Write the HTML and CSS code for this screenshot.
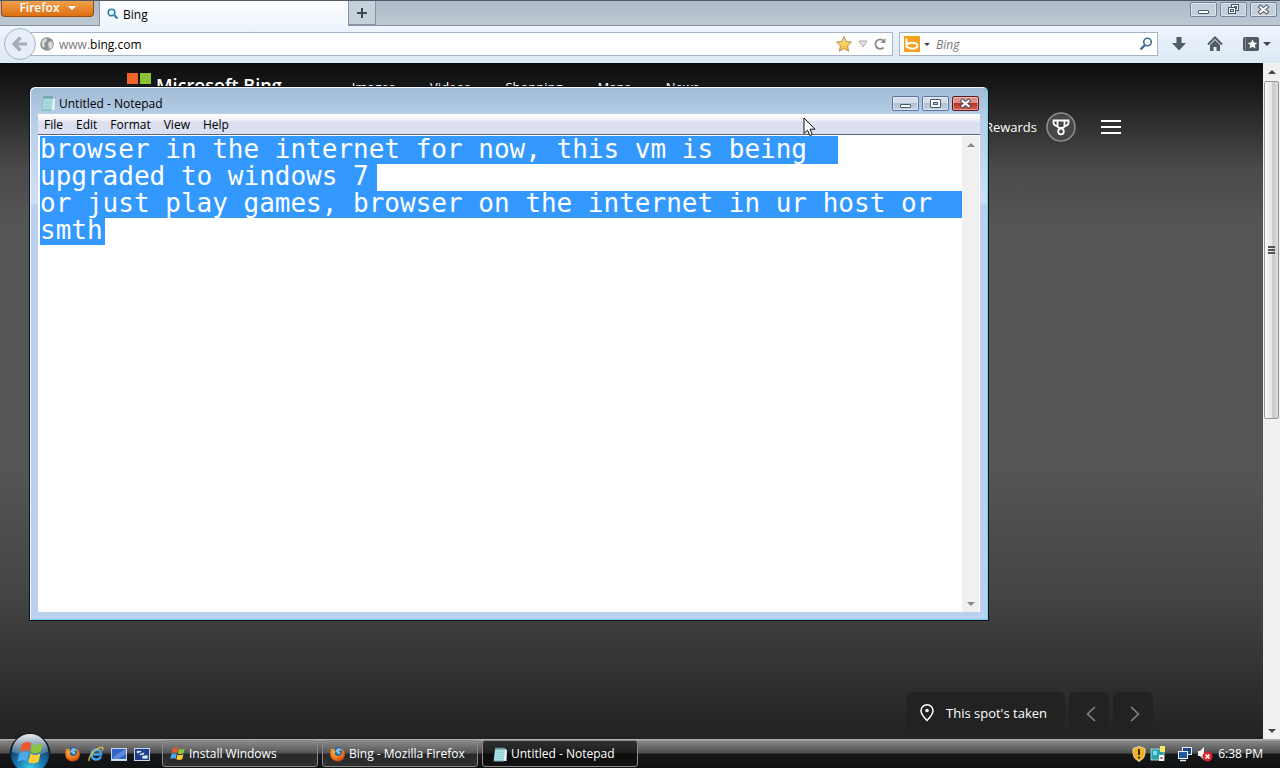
FILE: index.html
```html
<!DOCTYPE html>
<html lang="en">
<head>
  <meta charset="UTF-8" />
  <meta name="viewport" content="width=device-width, initial-scale=1.0" />
  <title>Desktop</title>
  <link rel="stylesheet" href="styles.css">
</head>
<body>

  <!-- shared icons -->
  <svg class="sprite" aria-hidden="true">
    <defs>
      <radialGradient id="foxOrange" cx="0.4" cy="0.3" r="0.8">
        <stop offset="0" stop-color="#ffc03a" />
        <stop offset="0.6" stop-color="#ee7413" />
        <stop offset="1" stop-color="#b8340a" />
      </radialGradient>
      <linearGradient id="starGold" x1="0" y1="0" x2="0" y2="1">
        <stop offset="0" stop-color="#ffe98c" />
        <stop offset="1" stop-color="#f5b92e" />
      </linearGradient>
      <radialGradient id="orbBlue" cx="0.5" cy="0.9" r="0.9">
        <stop offset="0" stop-color="#3fd0ee" />
        <stop offset="0.4" stop-color="#1778b0" />
        <stop offset="0.8" stop-color="#123d66" />
        <stop offset="1" stop-color="#2d4d68" />
      </radialGradient>
      <linearGradient id="orbShine" x1="0" y1="0" x2="0" y2="1">
        <stop offset="0" stop-color="#fff" stop-opacity="0.9" />
        <stop offset="1" stop-color="#fff" stop-opacity="0.15" />
      </linearGradient>
    </defs>
    <symbol id="flag" viewBox="0 0 20 20">
      <path d="M3.500 3.500q3.500-2.500 6.800-0.500l-1.400 6q-3.300-2-7 0.200z" fill="#e8582a" />
      <path d="M11 3.500q3.500 1.800 7.500-0.500l-1.500 6q-3.700 2.200-7.300 0.500z" fill="#8cc63e" />
      <path d="M1.600 10.300q3.600-2.200 7-0.200l-1.400 6q-3.300-2-7 0.300z" fill="#4aa8e8" />
      <path d="M9.500 10.500q3.700 1.800 7.300-0.300l-1.400 6.100q-3.700 2-7.400 0.300z" fill="#ffcb2e" />
    </symbol>
    <symbol id="firefox" viewBox="0 0 16 16">
      <circle cx="8" cy="7.500" r="6.500" fill="#2a5f9e" />
      <path d="M8 2q3 0 4 3q-2-1-3 0q2 1 1 3q-2 1-3-1q-2-1-1-3z" fill="#7cc0ea" />
      <path d="M1 1.500q0.500 1.500 1.500 1.700q1.500-0.800 3-0.300q-1.500 1-1.300 2.200l2 0.700q-0.700 0.900-1.700 1.200q0.500 3 3.500 3q3.500-0.200 3.800-3.500q1-1.500-0.800-4q3.300 1.300 3.800 4.500q0.900 7.500-6.500 8.500q-8-0.300-8-7.500q0-2 0.500-3.500q-0.300-1.500 0.200-3z" fill="url(#foxOrange)" />
    </symbol>
    <symbol id="notepad" viewBox="0 0 16 16">
      <path d="M3 2.500h10.500l-0.500 11.500-1.500 1.500h-10z" fill="#6fa9b4" />
      <path d="M3.500 2.500h9.500l-1 12h-10z" fill="#a9dde2" />
      <path d="M13 3l2 1-0.500 11h-3z" fill="#e9f3f3" />
      <path d="M4 1v3M6 1v3M8 1v3M10 1v3M12 1v3" stroke="#4f7f8c" stroke-width="0.800" />
      <path d="M4 6.500h8M4 8.500h8M3.500 10.500h8M3.500 12.500h8" stroke="#8ec7d0" stroke-width="0.600" />
    </symbol>
    <symbol id="minimize" viewBox="0 0 27 15">
      <rect x="8.500" y="8.500" width="10" height="3" rx="0.500" fill="#fff" stroke="#4b566f" />
    </symbol>
    <symbol id="maximize" viewBox="0 0 27 15">
      <rect x="8.500" y="3.500" width="10" height="8" rx="0.500" fill="#fff" stroke="#4b566f" />
      <rect x="11.500" y="6.500" width="4" height="2" fill="#b9c8dc" stroke="#4b566f" />
    </symbol>
    <symbol id="restore" viewBox="0 0 27 15">
      <rect x="11.500" y="2.500" width="7" height="6" fill="#fff" stroke="#4b566f" />
      <rect x="14.500" y="4.500" width="2" height="2" fill="#cdd8e4" stroke="#4b566f" />
      <rect x="8.500" y="5.500" width="7" height="6" fill="#fff" stroke="#4b566f" />
      <rect x="10.500" y="7.500" width="3" height="2" fill="#cdd8e4" stroke="#4b566f" />
    </symbol>
    <symbol id="close" viewBox="0 0 27 15">
      <path d="M10.500 5l6 5M16.500 5l-6 5" stroke="#4b4f62" stroke-width="4" stroke-linecap="square" />
      <path d="M10.500 5l6 5M16.500 5l-6 5" stroke="#fff" stroke-width="2.200" stroke-linecap="square" />
    </symbol>
  </svg>

  <main class="browser">
    <header class="tab-strip">
      <button class="firefox-button">Firefox <span class="caret"></span></button>
      <button class="tab">
        <svg class="teal" width="12" height="12" viewBox="0 0 12 12"><circle cx="4.500" cy="4.500" r="3.300" fill="none" stroke-width="1.600" /><path d="M7 7l3.500 3.500" stroke-width="2" /></svg>
        Bing
      </button>
      <button class="new-tab" aria-label="New tab">
        <svg width="12" height="12" viewBox="0 0 12 12"><path d="M6 1v10M1 6h10" stroke="#3e4852" stroke-width="2" /></svg>
      </button>
      <div class="caption-buttons">
        <button aria-label="Minimize"><svg><use href="#minimize" /></svg></button>
        <button aria-label="Restore"><svg><use href="#restore" /></svg></button>
        <button aria-label="Close"><svg><use href="#close" /></svg></button>
      </div>
    </header>

    <div class="toolbar">
      <button class="back" aria-label="Back">
        <svg width="16" height="16" viewBox="0 0 16 16"><path d="M8.500 1.500L2 8l6.500 6.500M3 8h12" fill="none" stroke="#a3adb9" stroke-width="3.200" /></svg>
      </button>
      <div class="url-bar">
        <svg width="14" height="14" viewBox="0 0 14 14"><circle cx="7" cy="7" r="6.800" fill="#8f9295" /><path d="M2 4q3-3 5-2l-1 3-2 1 1 2-1 3q-3-2-2-7zM8 6l3-2 2 3-1 4-3 1z" fill="#d9dbdd" /></svg>
        <span class="url"><span class="dim">www.</span>bing.com</span>
        <svg width="18" height="18" viewBox="0 0 18 18"><path d="M9 1.500l2.200 5 5.300 0.600-3.900 3.700 1 5.400-4.600-2.700-4.600 2.700 1-5.400-3.900-3.700 5.300-0.600z" fill="url(#starGold)" stroke="#b8905a" /></svg>
        <svg width="10" height="8" viewBox="0 0 10 8"><path d="M1 1h8l-4 6z" fill="#e4e4e4" stroke="#a9a9a9" /></svg>
        <svg width="14" height="14" viewBox="0 0 14 14"><path d="M10.500 10.500A4.700 4.700 0 1 1 10.500 3.800" fill="none" stroke="#8d8d8d" stroke-width="2" /><path d="M7.500 6h5V1z" fill="#8d8d8d" /></svg>
      </div>
      <label class="search-bar">
        <svg width="16" height="16" viewBox="0 0 16 16"><rect width="16" height="16" fill="#f3a21f" /><path d="M2.500 2.500v9M3 11q6 3 9.500 0.500q2-2.500-0.500-4q-4-1.500-8.500 0.500" fill="none" stroke="#fff" stroke-width="2" /></svg>
        <span class="caret dark small"></span>
        <input type="text" placeholder="Bing" aria-label="Search">
        <svg width="14" height="14" viewBox="0 0 14 14"><circle cx="8.500" cy="5" r="3.800" fill="none" stroke="#3f6d96" stroke-width="1.600" /><path d="M6 8l-4.500 4.500" stroke="#3f6d96" stroke-width="2.400" /></svg>
      </label>
      <button class="tool" aria-label="Downloads"><svg width="14" height="14" viewBox="0 0 14 14"><path d="M4.500 0h5v6h4.500l-7 7.500-7-7.500h4.500z" fill="#525c68" /></svg></button>
      <button class="tool" aria-label="Home"><svg width="16" height="16" viewBox="0 0 16 16"><path d="M1 8.500l7-7 7 7" fill="none" stroke="#525c68" stroke-width="2" /><path d="M3 9l5-5 5 5v6h-3.500v-4h-3v4h-3.500z" fill="#525c68" /></svg></button>
      <button class="tool" aria-label="Bookmarks">
        <svg width="16" height="14" viewBox="0 0 16 14"><rect width="16" height="14" rx="2" fill="#4f5863" /><path d="M2.500 1v12" stroke="#8a929c" /><path d="M9.500 2.500l1.500 3 3.200 0.400-2.400 2.200 0.700 3.300-3-1.700-3 1.700 0.700-3.300-2.400-2.200 3.200-0.400z" fill="#fff" /></svg>
        <span class="caret dark"></span>
      </button>
    </div>

    <div class="viewport">
      <div class="bing">
        <header class="bing-header">
          <a class="logo" href="#">
            <svg width="24" height="24" viewBox="0 0 24 24"><path d="M0 0h11v11H0z" fill="#f1642a" /><path d="M13 0h11v11H13z" fill="#8bc234" /><path d="M0 13h11v11H0z" fill="#1ba5e8" /><path d="M13 13h11v11H13z" fill="#f8b91c" /></svg>
            Microsoft Bing
          </a>
          <nav>
            <a href="#">Images</a>
            <a href="#">Videos</a>
            <a href="#">Shopping</a>
            <a href="#">Maps</a>
            <a href="#">News</a>
          </nav>
          <div class="account">
            <a href="#">Rewards</a>
            <svg width="30" height="30" viewBox="0 0 30 30"><circle cx="15" cy="15" r="14" fill="#474747" stroke="#8b8b8b" stroke-width="1.600" /><g fill="none" stroke="#fff" stroke-width="1.800"><path d="M7.500 8.500h15v2.500q0 2-3 3l-3 2h-3l-3-2q-3-1-3-3zM11.500 8.500v5.500M18.500 8.500v5.500" /><circle cx="15" cy="19.500" r="2.800" /></g></svg>
            <button class="menu-toggle" aria-label="Menu"><svg width="20" height="16" viewBox="0 0 20 16"><path d="M0 2h20M0 8h20M0 14h20" stroke="#fff" stroke-width="2" /></svg></button>
          </div>
        </header>
        <footer class="spot">
          <a class="place" href="#">
            <svg width="14" height="18" viewBox="0 0 14 18"><path d="M7 16.500q-6-6-6-9.700a6 6 0 0 1 12 0q0 3.700-6 9.700z" fill="none" stroke="#fff" stroke-width="1.500" /><circle cx="7" cy="6.500" r="1.800" fill="#fff" /></svg>
            This spot's taken
          </a>
          <button class="arrow" aria-label="Previous"><svg width="10" height="16" viewBox="0 0 10 16"><path d="M9 1L1.500 8L9 15" fill="none" stroke="#858585" stroke-width="1.600" /></svg></button>
          <button class="arrow" aria-label="Next"><svg width="10" height="16" viewBox="0 0 10 16"><path d="M1 1L8.500 8L1 15" fill="none" stroke="#858585" stroke-width="1.600" /></svg></button>
        </footer>
      </div>
      <div class="scrollbar">
        <span class="step up"></span>
        <span class="thumb"></span>
        <span class="step down"></span>
      </div>
    </div>
  </main>

  <section class="notepad">
    <header class="title-bar">
      <svg width="16" height="16"><use href="#notepad" /></svg>
      <span class="title">Untitled - Notepad</span>
      <div class="caption-buttons">
        <button aria-label="Minimize"><svg><use href="#minimize" /></svg></button>
        <button aria-label="Maximize"><svg><use href="#maximize" /></svg></button>
        <button class="red" aria-label="Close"><svg><use href="#close" /></svg></button>
      </div>
    </header>
    <nav class="menu-bar">
      <button>File</button>
      <button>Edit</button>
      <button>Format</button>
      <button>View</button>
      <button>Help</button>
    </nav>
    <div class="editor">
      <textarea id="note" aria-label="Text" spellcheck="false">browser in the internet for now, this vm is being
upgraded to windows 7
or just play games, browser on the internet in ur host or
smth</textarea>
      <div class="scrollbar disabled">
        <span class="step up"></span>
        <span class="step down"></span>
      </div>
    </div>
  </section>

  <svg class="cursor" width="14" height="21" viewBox="0 0 14 21"><path d="M1 1v15.500l3.500-3.300 2.300 5.300 2.500-1-2.300-5.300h5z" fill="#fff" stroke="#111" /></svg>

  <footer class="taskbar">
    <button class="start" aria-label="Start">
      <svg width="42" height="42" viewBox="0 0 42 42">
        <circle cx="21" cy="21" r="20.500" fill="#0d1c28" />
        <circle cx="21" cy="21" r="19" fill="url(#orbBlue)" />
        <path d="M3 19a18 18 0 0 1 36 0q-18 6-36 0z" fill="url(#orbShine)" />
        <use href="#flag" x="8" y="6" width="28" height="28" />
      </svg>
    </button>
    <div class="quick-launch">
      <button aria-label="Firefox"><svg width="16" height="16"><use href="#firefox" /></svg></button>
      <button aria-label="Internet Explorer"><svg width="16" height="16" viewBox="0 0 16 16"><path d="M13 10.500q-1.500 3-5 3q-5-0.500-4.500-5.500q0.800-4.500 5-4.500q4.500 0.300 4.500 5h-8.500" fill="none" stroke="#3aa5ef" stroke-width="2.400" /><path d="M1.500 15q-2-2 3.500-8.500q6-6 9.500-5q1 0.800-0.500 3" fill="none" stroke="#f0bd3a" stroke-width="1.300" /></svg></button>
      <button aria-label="Show desktop"><svg width="16" height="16" viewBox="0 0 16 16"><rect x="0.500" y="2.500" width="15" height="12" fill="#3565c4" stroke="#c6d6ea" /><path d="M1 13l5-5 9-5v5l-8 5z" fill="#5f8ada" /><path d="M1 13.500h14" stroke="#dbe6f3" /></svg></button>
      <button aria-label="Switch windows"><svg width="16" height="16" viewBox="0 0 16 16"><rect x="0.500" y="2.500" width="15" height="12" fill="#1c3f87" stroke="#c6d6ea" /><path d="M2.500 4.500h5v3h-5zM5.500 6.500h5v3h-5zM8 9h6v4h-6z" fill="#dce8f6" stroke="#1c3f87" stroke-width="0.700" /></svg></button>
    </div>
    <div class="tasks">
      <button class="task"><svg width="16" height="16"><use href="#flag" /></svg>Install Windows</button>
      <button class="task"><svg width="16" height="16"><use href="#firefox" /></svg>Bing - Mozilla Firefox</button>
      <button class="task active"><svg width="16" height="16"><use href="#notepad" /></svg>Untitled - Notepad</button>
    </div>
    <div class="tray">
      <svg width="14" height="16" viewBox="0 0 14 16"><path d="M7 0.500l6 2v5q0 5-6 8q-6-3-6-8v-5z" fill="#f2b21d" stroke="#d9d3c0" /><path d="M7 3v6M7 10.500v2" stroke="#3a2a05" stroke-width="2" /></svg>
      <svg width="17" height="16" viewBox="0 0 17 16"><rect x="1" y="3" width="13" height="11" fill="#2aa0a8" stroke="#9fd8cf" /><path d="M3 5h4v4h-4z" fill="#7fe0e4" /><rect x="10" y="0" width="5" height="6" fill="#f2ea62" /><rect x="9" y="9" width="5" height="6" fill="#fff" /><rect x="10.500" y="11" width="2" height="2" fill="#c33" /></svg>
      <svg class="network" width="16" height="16" viewBox="0 0 16 16"><rect x="5.500" y="1.500" width="9" height="7" fill="#174a86" stroke="#e8f1fa" /><rect x="1.500" y="5.500" width="9" height="7" fill="#1d5aa0" stroke="#e8f1fa" /><path d="M3 14.500h6" stroke="#e8f1fa" stroke-width="1.500" /></svg>
      <svg width="16" height="16" viewBox="0 0 16 16"><path d="M1 5h2l4-4v13l-4-4h-2z" fill="#f1f1f1" /><circle cx="10.500" cy="10.500" r="5" fill="#d8232f" /><path d="M8.500 8.500l4 4M12.500 8.500l-4 4" stroke="#fff" stroke-width="1.600" /></svg>
      <time>6:38 PM</time>
    </div>
  </footer>

  <script>
    // the whole note is selected when the window opens
    const note = document.getElementById("note");
    note.focus();
    note.select();
  </script>
</body>
</html>
```
FILE: styles.css
```css
:root {
  --ui: "Open Sans", "Noto Sans", sans-serif;
  --mono: "DejaVu Sans Mono", monospace;
  --select: linear-gradient(#3399ff, #3399ff);
}

* {
  box-sizing: border-box;
}

body {
  margin: 0;
  height: 100vh;
  display: flex;
  flex-direction: column;
  overflow: hidden;
  position: relative;
  font-family: var(--ui);
  font-size: 12px;
  color: #000;
}

button {
  font: inherit;
  color: inherit;
  background: none;
  border: 0;
  padding: 0;
  display: flex;
  align-items: center;
}

a {
  color: inherit;
  text-decoration: none;
}

svg {
  display: block;
  flex: none;
}

.sprite {
  position: absolute;
  width: 0;
  height: 0;
}

.caret {
  border: 4px solid transparent;
  border-top-color: #fff;
  border-bottom: 0;
}

.caret.dark {
  border-top-color: #444;
}

.caret.small {
  border-width: 3px 3px 0;
}

/* browser */
.browser {
  flex: 1;
  min-height: 0;
  display: flex;
  flex-direction: column;
}

.tab-strip {
  display: flex;
  align-items: flex-start;
  height: 26px;
  background: linear-gradient(#aebbc7, #bcc8d2);
  border-top: 1px solid #4d5a68;
  border-bottom: 1px solid #8593a5;
}

.firefox-button {
  justify-content: center;
  gap: 8px;
  width: 93px;
  height: 16px;
  margin: 0 5px 0 1px;
  padding-bottom: 2px;
  background: linear-gradient(#f0a04c, #dd6f10);
  border: 1px solid #9a4d10;
  border-top: 0;
  border-radius: 0 0 4px 4px;
  color: #fff;
  font-weight: 600;
}

.tab {
  gap: 4px;
  width: 249px;
  height: 26px;
  padding-left: 7px;
  background: linear-gradient(#fcfdff, #eef5fd);
  border-left: 1px solid #8593a5;
}

.teal {
  stroke: #2482a8;
}

.new-tab {
  justify-content: center;
  width: 28px;
  height: 24px;
  background: #c6d0da;
  border: 1px solid #8593a5;
  border-top: 0;
}

.caption-buttons {
  display: flex;
  gap: 3px;
  margin-left: auto;
}

.caption-buttons button {
  width: 27px;
  height: 15px;
  background: linear-gradient(#d4deeb 45%, #b2c1d4 50%, #c4d2e2);
  border: 1px solid #76859f;
  border-radius: 2px;
  box-shadow: inset 0 0 0 1px rgba(255, 255, 255, 0.4);
}

.caption-buttons svg {
  width: 27px;
  height: 15px;
  margin: -1px;
}

.caption-buttons .red {
  background: linear-gradient(#dc9088 45%, #b83227 50%, #d4614e);
  border-color: #5d1a20;
}

.tab-strip .caption-buttons {
  margin-top: 1px;
  margin-right: 3px;
}

.tab-strip .caption-buttons button {
  background: #c3cfdb;
}

.toolbar {
  display: flex;
  align-items: center;
  height: 37px;
  padding: 0 8px 1px 4px;
  background: linear-gradient(#eef5fd, #dce8f5);
}

.back {
  justify-content: center;
  width: 32px;
  height: 32px;
  border: 1px solid #a8b4c4;
  border-radius: 50%;
  background: #e6eef7;
  z-index: 1;
}

.url-bar,
.search-bar {
  display: flex;
  align-items: center;
  height: 24px;
  background: #fff;
  border: 1px solid #a5b4c6;
}

.url-bar {
  flex: 1;
  gap: 5px;
  margin-left: -6px;
  padding: 0 5px 0 9px;
}

.url {
  flex: 1;
}

.dim {
  color: #777;
}

.search-bar {
  gap: 4px;
  width: 259px;
  margin: 0 6px;
  padding: 0 4px;
}

.search-bar input {
  flex: 1;
  min-width: 0;
  padding: 0 2px;
  border: 0;
  outline: 0;
  font: italic 12px var(--ui);
}

.search-bar input::placeholder {
  color: #777;
}

.tool {
  justify-content: center;
  gap: 4px;
  min-width: 30px;
  margin-right: 6px;
}

.tool:last-child {
  margin: 0 0 0 6px;
}

.viewport {
  flex: 1;
  min-height: 0;
  display: flex;
}

.bing {
  flex: 1;
  display: flex;
  flex-direction: column;
  justify-content: space-between;
  background: linear-gradient(#0b0c0e, #1c1c1c 30px, #4a4a4a 105px, #555 160px, #555 60%, #454545 78%, #222);
  color: #fff;
  font-size: 13px;
}

.bing-header {
  display: flex;
  align-items: flex-start;
  padding: 10px 142px 0 127px;
}

.logo {
  display: flex;
  align-items: center;
  gap: 5px;
  line-height: 24px;
  font-size: 18px;
  font-weight: 600;
}

.bing-header nav {
  display: flex;
  gap: 35px;
  margin-left: 70px;
  line-height: 28px;
}

.account {
  display: flex;
  align-items: center;
  gap: 9px;
  margin: 39px 0 0 auto;
}

.menu-toggle {
  margin-left: 16px;
}

.spot {
  display: flex;
  justify-content: flex-end;
  gap: 4px;
  padding-right: 110px;
}

.place,
.arrow {
  display: flex;
  align-items: center;
  height: 47px;
  background: #222;
  border-radius: 6px 6px 0 0;
}

.place {
  gap: 12px;
  padding: 0 18px 6px 14px;
}

.arrow {
  justify-content: center;
  width: 40px;
  padding: 0 0 4px 4px;
}

.scrollbar {
  display: flex;
  flex-direction: column;
  width: 17px;
  background: #f0f0f0;
}

.step {
  height: 17px;
  display: flex;
  align-items: center;
  justify-content: center;
}

.step::before {
  content: "";
  border: 4px solid transparent;
}

.up::before {
  border-bottom-color: #444;
  border-top: 0;
}

.down {
  margin-top: auto;
}

.down::before {
  border-top-color: #444;
  border-bottom: 0;
}

.thumb {
  display: flex;
  align-items: center;
  justify-content: center;
  height: 50%;
  margin: 1px 1px 0;
  background: linear-gradient(90deg, #fafafa, #e6e6e6 50%, #c8c8c8 60%, #dcdcdc);
  border: 1px solid #979797;
  border-radius: 2px;
}

.thumb::before {
  content: "";
  width: 7px;
  height: 8px;
  background: repeating-linear-gradient(#555 0 2px, transparent 2px 3px);
}

/* notepad */
.notepad {
  position: absolute;
  top: 86px;
  right: 291px;
  bottom: 147px;
  left: 29px;
  display: flex;
  flex-direction: column;
  padding: 0 8px 8px;
  background: linear-gradient(#a0bad4, #b4cde6 27px, #d0e0f4 116px, #b9d1ee 117px);
  border: 1px solid #0d1116;
  border-radius: 6px 6px 0 0;
  box-shadow: inset 1px 1px 0 #f2f8fd, inset -1px -1px 0 #6fd3f2;
}

.title-bar {
  display: flex;
  align-items: center;
  gap: 3px;
  height: 27px;
  padding: 6px 1px 1px 2px;
}

.title-bar .caption-buttons button {
  border-color: #5f76a3;
}

.title-bar .caption-buttons .red {
  border-color: #5d1a20;
}

.menu-bar {
  display: flex;
  gap: 13px;
  height: 21px;
  padding: 0 6px;
  background: linear-gradient(#fff, #f3f0f5 30%, #dcdff0 40%, #dbe2f3);
  border-bottom: 1px solid #5b6680;
}

.editor {
  flex: 1;
  min-height: 0;
  display: flex;
  padding: 1px 1px 0 2px;
  background: #fff;
}

/* selection bars sit behind the text, so a line never cuts the
   descenders of the line above it */
.editor textarea {
  flex: 1;
  min-width: 0;
  margin: 0;
  padding: 0;
  border: 0;
  outline: 0;
  resize: none;
  overflow: hidden;
  font: 26px/27px var(--mono);
  background-color: #fff;
  background-image: var(--select), var(--select), var(--select), var(--select);
  background-size: 51ch 28px, 337px 27px, 100% 27px, 65px 27px;
  background-position: 0 0, 0 28px, 0 55px, 0 82px;
  background-repeat: no-repeat;
}

.editor textarea::selection {
  background: transparent;
  color: #fff;
}

.scrollbar.disabled .up::before {
  border-bottom-color: #888;
}

.scrollbar.disabled .down::before {
  border-top-color: #888;
}

.cursor {
  position: absolute;
  top: 117px;
  left: 803px;
}

/* taskbar */
.taskbar {
  display: flex;
  align-items: center;
  height: 29px;
  background: linear-gradient(#b0b0b0 1px, #868686 2px, #4e4e4e 14px, #17181a 15px, #101112);
  color: #fff;
}

.start {
  margin: 0 14px 0 9px;
  height: 29px;
  align-items: flex-start;
}

.start svg {
  margin-top: -6px;
}

.quick-launch {
  display: flex;
  gap: 7px;
  margin-right: 12px;
}

.tasks {
  display: flex;
  gap: 4px;
}

.task {
  gap: 3px;
  width: 156px;
  height: 27px;
  padding-left: 7px;
  background: linear-gradient(#8a8a8a, #555 48%, #26282a 52%, #2e3032);
  border: 1px solid #8a8a8a;
  border-radius: 3px;
}

.task.active {
  padding-left: 9px;
  background: linear-gradient(#303030, #1d1d1d 48%, #0b0b0b 52%, #141414);
}

.tray {
  display: flex;
  align-items: center;
  gap: 4px;
  margin-left: auto;
  padding-right: 17px;
}

.tray .network {
  margin-left: 6px;
}

.tray time {
  margin-left: 1px;
}
```
